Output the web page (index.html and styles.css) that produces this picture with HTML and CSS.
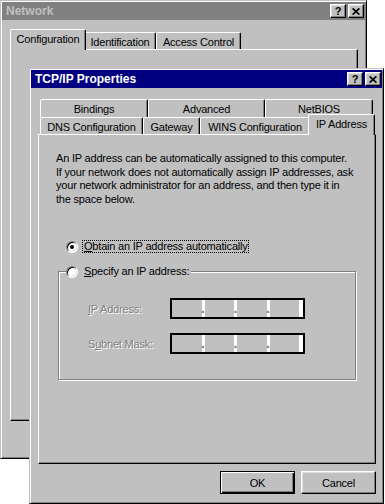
FILE: index.html
```html
<!DOCTYPE html>
<html>
<head>
<meta charset="utf-8">
<title>TCP/IP Properties</title>
<link rel="stylesheet" href="styles.css">
</head>
<body>
<div class="window win-network">
  <div class="titlebar inactive">
    <span class="title">Network</span>
    <div class="tb-buttons">
      <span class="tb-btn help">?</span>
      <span class="tb-btn close"><svg width="8" height="7" viewBox="0 0 8 7"><path d="M0.6 0.4 L7.4 6.6 M7.4 0.4 L0.6 6.6" stroke="#000" stroke-width="1.7"/></svg></span>
    </div>
  </div>
  <div class="tabstrip net-tabs">
    <div class="tab selected t-config">Configuration</div>
    <div class="tab t-ident">Identification</div>
    <div class="tab t-access">Access Control</div>
  </div>
  <div class="panel net-panel"></div>
</div>

<div class="window win-tcp">
  <div class="titlebar active">
    <span class="title">TCP/IP Properties</span>
    <div class="tb-buttons">
      <span class="tb-btn help">?</span>
      <span class="tb-btn close"><svg width="8" height="7" viewBox="0 0 8 7"><path d="M0.6 0.4 L7.4 6.6 M7.4 0.4 L0.6 6.6" stroke="#000" stroke-width="1.7"/></svg></span>
    </div>
  </div>
  <div class="tcp-tabs">
    <div class="tabrow back">
      <div class="tab t-bind">Bindings</div>
      <div class="tab t-adv">Advanced</div>
      <div class="tab t-netbios">NetBIOS</div>
    </div>
    <div class="tabrow front">
      <div class="tab t-dns">DNS Configuration</div>
      <div class="tab t-gw">Gateway</div>
      <div class="tab t-wins">WINS Configuration</div>
      <div class="tab selected t-ip">IP Address</div>
    </div>
  </div>
  <div class="panel tcp-panel">
    <p class="intro">An IP address can be automatically assigned to this computer.<br>If your network does not automatically assign IP addresses, ask<br>your network administrator for an address, and then type it in<br>the space below.</p>
    <div class="radio-row obtain">
      <span class="radio checked"></span>
      <span class="radio-label focus"><u>O</u>btain an IP address automatically</span>
    </div>
    <fieldset class="group">
      <legend class="group-legend">
        <span class="radio"></span>
        <span class="radio-label"><u>S</u>pecify an IP address:</span>
      </legend>
      <div class="field-row first">
        <span class="dis-label"><u>I</u>P Address:</span>
        <div class="ipbox">
          <span class="seg"></span><span class="sep">.</span>
          <span class="seg"></span><span class="sep">.</span>
          <span class="seg"></span><span class="sep">.</span>
          <span class="seg"></span><span class="sep end"></span>
        </div>
      </div>
      <div class="field-row">
        <span class="dis-label">S<u>u</u>bnet Mask:</span>
        <div class="ipbox">
          <span class="seg"></span><span class="sep">.</span>
          <span class="seg"></span><span class="sep">.</span>
          <span class="seg"></span><span class="sep">.</span>
          <span class="seg"></span><span class="sep end"></span>
        </div>
      </div>
    </fieldset>
  </div>
  <div class="buttons">
    <button class="btn default">OK</button>
    <button class="btn">Cancel</button>
  </div>
</div>
</body>
</html>
```
FILE: styles.css
```css
* { box-sizing: border-box; }
html, body { margin: 0; padding: 0; }
body {
  width: 385px;
  height: 504px;
  background: #fff;
  font-family: "Liberation Sans", Arial, sans-serif;
  font-size: 11px;
  letter-spacing: -0.2px;
  color: #000;
  position: relative;
  overflow: hidden;
}

/* windows on the desktop */
.window {
  position: absolute;
  background: #c0c0c0;
  border: 1px solid;
  border-color: #c0c0c0 #000 #000 #c0c0c0;
  box-shadow: inset 1px 1px #fff, inset -1px -1px #808080;
  padding: 1px;
  display: flex;
  flex-direction: column;
}
.win-network { left: 0; top: 0; width: 367px; height: 459px; }
.win-tcp { left: 29px; top: 68px; width: 355px; height: 436px; }

/* title bars */
.titlebar {
  height: 18px;
  flex: none;
  display: flex;
  align-items: center;
  padding: 0 1px 0 4px;
}
.titlebar.inactive { background: #808080; color: #c0c0c0; }
.titlebar.active { background: #000080; color: #fff; }
.title { font-weight: bold; font-size: 12px; letter-spacing: 0; }
.tb-buttons { margin-left: auto; display: flex; gap: 2px; }
.tb-btn {
  width: 16px;
  height: 14px;
  background: #c0c0c0;
  border: 1px solid;
  border-color: #fff #000 #000 #fff;
  box-shadow: inset -1px -1px #808080, inset 1px 1px #dfdfdf;
  display: flex;
  align-items: center;
  justify-content: center;
  color: #000;
  font-weight: bold;
  font-size: 11px;
  letter-spacing: 0;
  line-height: 1;
}

/* tabs */
.tab {
  height: 17px;
  background: #c0c0c0;
  border: 1px solid;
  border-bottom: none;
  border-color: #fff #000 transparent #fff;
  border-radius: 2px 2px 0 0;
  box-shadow: inset -1px 0 #808080;
  display: flex;
  align-items: center;
  justify-content: center;
  padding-top: 1px;
  flex: none;
}
.tab.selected {
  height: 21px;
  margin: 0 -2px -1px;
  position: relative;
  z-index: 1;
  padding-top: 0;
  padding-bottom: 2px;
}
.tabstrip { display: flex; align-items: flex-end; flex: none; }
.net-tabs { height: 20px; margin: 9px 0 0 10px; }
.t-config { width: 76px; }
.t-ident { width: 72px; }
.t-access { width: 85px; }

.tcp-tabs { display: flex; flex-direction: column; margin: 11px 0 0 9px; flex: none; }
.tabrow { display: flex; align-items: flex-end; }
.tabrow.back { height: 18px; }
.tabrow.back .tab { height: 18px; padding-bottom: 1px; }
.tabrow.front { height: 17px; }
.t-bind { width: 108px; }
.t-adv { width: 117px; }
.t-netbios { width: 108px; }
.t-dns { width: 103px; }
.t-gw { width: 57px; }
.t-wins { width: 110px; }
.t-ip { width: 67px; }

/* panels */
.panel {
  flex: 1;
  border: 1px solid;
  border-color: #fff #000 #000 #fff;
  box-shadow: inset -1px -1px #808080;
}
.net-panel { margin: 0 7px 36px 8px; }
.tcp-panel { margin: 0 6px 0 7px; padding: 17px 0 0; }

.intro { margin: 0 0 0 17px; line-height: 13.6px; }

/* radios */
.radio-row { display: flex; align-items: center; height: 13px; }
.obtain { margin: 34px 0 0 27px; }
.radio {
  width: 12px;
  height: 12px;
  border-radius: 50%;
  background: #fff;
  border: 1px solid;
  border-color: #808080 #fff #fff #808080;
  box-shadow: inset 1px 1px #000, inset -1px -1px #dfdfdf;
  flex: none;
  display: flex;
  align-items: center;
  justify-content: center;
}
.radio.checked::after {
  content: "";
  width: 4px;
  height: 4px;
  border-radius: 50%;
  background: #000;
}
.radio-label { margin-left: 4px; line-height: 13px; padding: 0 1px 0 2px; }
.radio-label.focus { outline: 1px dotted #000; outline-offset: -1px; }

/* group box */
.group {
  margin: 12px 0 0 19px;
  width: 298px;
  padding: 0 0 25px 0;
  min-width: 0;
  border: 1px solid #808080;
  box-shadow: inset 1px 1px #fff, 1px 1px #fff;
}
.group-legend {
  margin-left: 7px;
  padding: 0 1px 0 0;
  display: flex;
  align-items: center;
  height: 13px;
  background: #c0c0c0;
}
.field-row { display: flex; align-items: center; margin: 14px 0 0 29px; }
.field-row.first { margin-top: 20px; }
.dis-label {
  width: 82px;
  color: #808080;
  text-shadow: 1px 1px #fff;
}
.ipbox {
  width: 135px;
  height: 21px;
  border: 2px solid #000;
  display: flex;
  background: #c0c0c0;
}
.seg { flex: 1; }
.sep {
  width: 3px;
  background: #fff;
  color: #808080;
  font-size: 14px;
  font-weight: bold;
  line-height: 1;
  display: flex;
  align-items: flex-end;
  justify-content: center;
  padding-bottom: 2px;
  letter-spacing: 0;
  overflow: visible;
}
.sep.end { width: 4px; }

/* dialog buttons */
.buttons {
  flex: none;
  display: flex;
  justify-content: flex-end;
  gap: 6px;
  margin: 7px 6px 8px 0;
}
.btn {
  width: 75px;
  height: 23px;
  font: inherit;
  letter-spacing: inherit;
  color: #000;
  background: #c0c0c0;
  border: 1px solid;
  border-color: #fff #000 #000 #fff;
  box-shadow: inset -1px -1px #808080, inset 1px 1px #dfdfdf;
  padding: 0;
}
.btn.default {
  border-color: #000;
  box-shadow: inset 1px 1px #fff, inset -1px -1px #000, inset -2px -2px #808080;
}
```
